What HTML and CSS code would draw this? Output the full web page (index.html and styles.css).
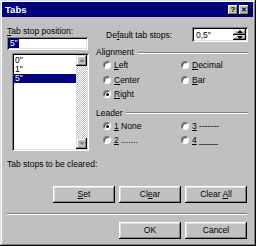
FILE: index.html
```html
<!DOCTYPE html>
<html>
<head>
<meta charset="utf-8">
<title>Tabs</title>
<link rel="stylesheet" href="styles.css">
</head>
<body>
<div class="window">
  <div class="titlebar">
    <span class="title">Tabs</span>
    <span class="tb-btn help">?</span>
    <span class="tb-btn close">&#x2715;</span>
  </div>

  <div class="main">
    <div class="col-left">
      <div class="label first"><u>T</u>ab stop position:</div>
      <div class="field"><span class="sel">5"</span></div>
      <div class="list">
        <div class="items">
          <div class="item">0"</div>
          <div class="item">1"</div>
          <div class="item picked">5"</div>
        </div>
        <div class="vscroll">
          <span class="sbtn"><i class="arr up"></i></span>
          <span class="track"></span>
          <span class="sbtn"><i class="arr down"></i></span>
        </div>
      </div>
      <div class="label cleared">Tab stops to be cleared:</div>
    </div>

    <div class="col-right">
      <div class="default-row">
        <span>De<u>f</u>ault tab stops:</span>
        <div class="field spin">
          <span class="val">0,5"</span>
          <div class="spin-btns">
            <span class="sbtn half"><i class="arr up"></i></span>
            <span class="sbtn half"><i class="arr down"></i></span>
          </div>
        </div>
      </div>

      <div class="legend">Alignment<span class="rule"></span></div>
      <div class="radios">
        <label class="opt"><span class="radio"></span><u>L</u>eft</label>
        <label class="opt"><span class="radio"></span><u>D</u>ecimal</label>
        <label class="opt"><span class="radio"></span><u>C</u>enter</label>
        <label class="opt"><span class="radio"></span><u>B</u>ar</label>
        <label class="opt"><span class="radio on"></span><u>R</u>ight</label>
      </div>

      <div class="legend leader">Leader<span class="rule"></span></div>
      <div class="radios">
        <label class="opt"><span class="radio on"></span><u>1</u>&nbsp;None</label>
        <label class="opt"><span class="radio"></span><u>3</u>&nbsp;-------</label>
        <label class="opt"><span class="radio"></span><u>2</u>&nbsp;.......</label>
        <label class="opt"><span class="radio"></span><u>4</u>&nbsp;____</label>
      </div>
    </div>
  </div>

  <div class="btn-row top">
    <span class="btn"><u>S</u>et</span>
    <span class="btn">Cl<u>e</u>ar</span>
    <span class="btn">Clear <u>A</u>ll</span>
  </div>
  <div class="sep"></div>
  <div class="btn-row bottom">
    <span class="btn">OK</span>
    <span class="btn">Cancel</span>
  </div>
</div>
</body>
</html>
```

FILE: styles.css
```css
body { margin: 0; background: #c0c0c0; }

.window {
    width: 256px;
    height: 246px;
    box-sizing: border-box;
    padding: 2px 2px 0 2px;
    background: #c0c0c0;
    box-shadow: inset -1px -1px #000, inset 1px 1px #dfdfdf,
                inset -2px -2px #808080, inset 2px 2px #fff;
    font-family: "Liberation Sans", Arial, sans-serif;
    font-size: 8.5px;
    color: #000;
}

u { text-decoration: underline; text-underline-offset: 1px; }

.titlebar {
    height: 15px;
    background: #000080;
    display: flex;
    align-items: center;
    padding: 0 4px 0 3px;
    margin-right: 1px;
}
.title { color: #fff; font-weight: bold; font-size: 9.5px; flex: 1; }
.tb-btn {
    width: 10px;
    height: 10px;
    background: #c0c0c0;
    box-shadow: inset -1px -1px #000, inset 1px 1px #fff, inset -2px -2px #808080;
    font-weight: bold;
    font-size: 8px;
    line-height: 10px;
    text-align: center;
}
.help { margin-right: 1px; }
.close { font-size: 7px; }

.main {
    display: grid;
    grid-template-columns: 81px 152px;
    column-gap: 8px;
    padding-left: 5px;
}

.label { line-height: 11px; white-space: nowrap; }
.label.first { margin-top: 9px; }

.field {
    background: #fff;
    box-shadow: inset 1px 1px #808080, inset -1px -1px #fff,
                inset 2px 2px #000, inset -2px -2px #dfdfdf;
}
.col-left > .field { height: 13px; padding: 2px 0 0 2px; box-sizing: border-box; line-height: 9px; }
.sel { background: #000080; color: #fff; padding: 0 1px; }

.list {
    margin: 3px 0 0 5px;
    width: 77px;
    height: 98px;
    box-sizing: border-box;
    padding: 2px;
    display: flex;
    background: #fff;
    box-shadow: inset 1px 1px #808080, inset -1px -1px #fff,
                inset 2px 2px #000, inset -2px -2px #dfdfdf;
}
.items { flex: 1; padding-top: 1px; }
.item { height: 9px; line-height: 9px; padding-left: 1px; }
.item.picked { background: #000080; color: #fff; }

.vscroll { width: 11px; display: flex; flex-direction: column; }
.track {
    flex: 1;
    background: repeating-conic-gradient(#c0c0c0 0 25%, #fff 0 50%) 0 0 / 2px 2px;
}
.sbtn {
    height: 11px;
    background: #c0c0c0;
    box-shadow: inset -1px -1px #000, inset 1px 1px #dfdfdf,
                inset -2px -2px #808080, inset 2px 2px #fff;
    display: flex;
    align-items: center;
    justify-content: center;
}
.arr { width: 0; height: 0; border-left: 3px solid transparent; border-right: 3px solid transparent; }
.arr.up { border-bottom: 3px solid #808080; }
.arr.down { border-top: 3px solid #808080; }
.spin .arr.up { border-bottom-color: #000; }
.spin .arr.down { border-top-color: #000; }

.label.cleared { margin-top: 8px; }

.default-row {
    margin-top: 10px;
    height: 15px;
    display: flex;
    align-items: center;
    justify-content: space-between;
    padding-left: 10px;
}
.spin {
    width: 56px;
    height: 15px;
    box-sizing: border-box;
    padding: 2px;
    display: flex;
    align-items: center;
}
.spin .val { flex: 1; padding-left: 2px; }
.spin-btns { width: 13px; height: 11px; display: flex; flex-direction: column; }
.sbtn.half { height: 5.5px; }

.legend {
    margin-top: 5px;
    line-height: 11px;
    display: flex;
    align-items: center;
}
.legend.leader { margin-top: 6px; }
.rule {
    flex: 1;
    margin-left: 4px;
    height: 0;
    border-top: 1px solid #808080;
    border-bottom: 1px solid #fff;
}

.radios {
    display: grid;
    grid-template-columns: 78px auto;
    grid-auto-rows: 14.5px;
    padding-left: 7px;
}
.opt { display: flex; align-items: center; white-space: nowrap; }
.radio {
    width: 8px;
    height: 8px;
    box-sizing: border-box;
    border-radius: 50%;
    margin-right: 3px;
    background: #fff;
    border: 1px solid;
    border-color: #808080 #fff #fff #808080;
    box-shadow: inset 1px 1px #404040;
    position: relative;
}
.radio.on::after {
    content: "";
    position: absolute;
    left: 2px;
    top: 2px;
    width: 3px;
    height: 3px;
    border-radius: 50%;
    background: #000;
}

.btn-row {
    display: flex;
    justify-content: flex-end;
    gap: 4px;
    padding-right: 7px;
}
.btn-row.top { margin-top: 16px; }
.btn-row.bottom { margin-top: 7px; }
.btn {
    width: 62px;
    height: 17px;
    line-height: 17px;
    text-align: center;
    background: #c0c0c0;
    box-shadow: inset -1px -1px #000, inset 1px 1px #fff,
                inset -2px -2px #808080, inset 2px 2px #dfdfdf;
}

.sep {
    margin: 10px 7px 0 5px;
    height: 0;
    border-top: 1px solid #808080;
    border-bottom: 1px solid #fff;
}
```
